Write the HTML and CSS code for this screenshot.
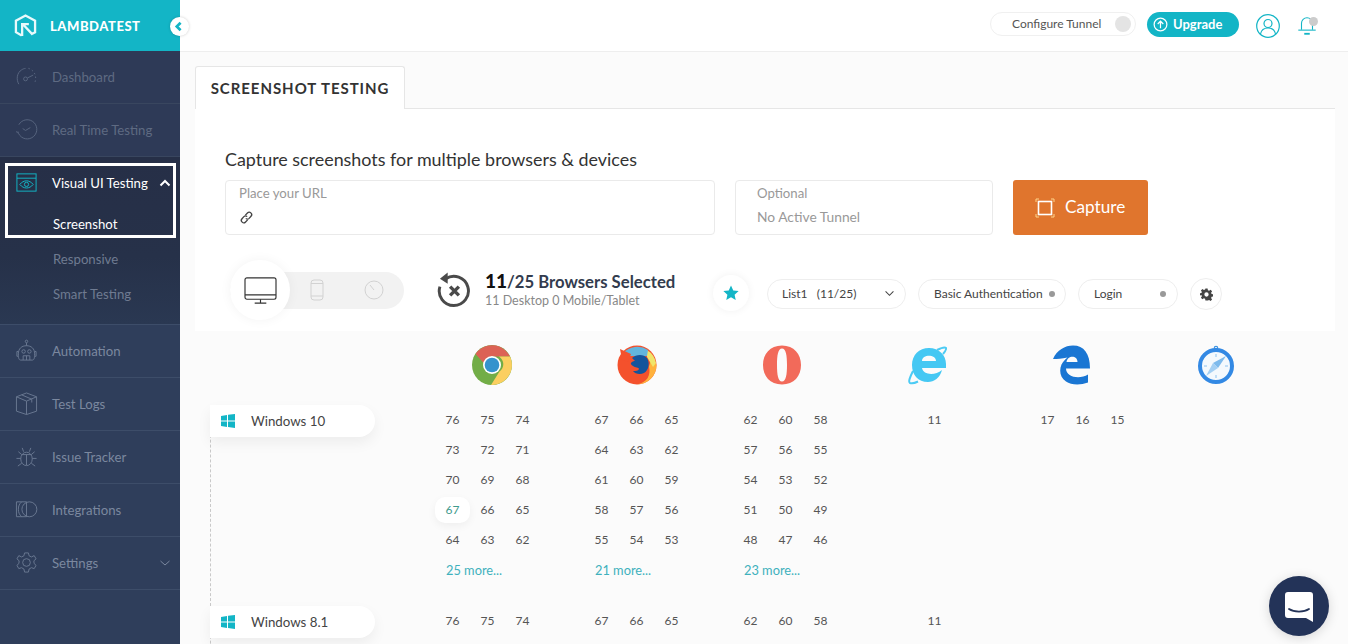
FILE: index.html
```html
<!DOCTYPE html>
<html lang="en">
<head>
  <meta charset="UTF-8" />
  <meta name="viewport" content="width=device-width, initial-scale=1.0"/>
  <title>Screenshot Testing - LambdaTest</title>
  <link rel="stylesheet" href="styles.css">
</head>
<body>
  <div class="app">
    <!-- Sidebar -->
    <aside class="sidebar">
      <div class="logo">
        <svg class="logo-mark" viewBox="0 0 24 24"><path d="M8 22.500 2 19V7l10-5.500L22 7v12l-3 1.700"/><path d="M8.500 23V10.500h7M10 11.500l9.500 10"/></svg>
        <span class="logo-text">LAMBDATEST</span>
      </div>

      <a class="nav-item nav-item--dim">
        <svg class="nav-icon" viewBox="0 0 24 24"><path d="M4 20C1 15 2 8 7 5c1.500-1 3-1.400 4-1.400"/><path stroke-dasharray="1.500 2.500" d="M14 3.500c5 1.500 8 6 7.500 11.500l-1 5"/><circle cx="11" cy="14.500" r="2"/><path d="m13 13.500 6-3"/></svg>
        Dashboard
      </a>
      <a class="nav-item nav-item--dim">
        <svg class="nav-icon" viewBox="0 0 24 24"><path d="M4 7a10 10 0 1 1-1 7"/><path d="M1 14c1 1 1.500 1 2.500 2M8 11l3 2 5-3"/></svg>
        Real Time Testing
      </a>

      <div class="nav-group">
        <div class="nav-group-head">
          <svg class="nav-icon nav-icon--teal" viewBox="0 0 24 24"><rect x="2" y="3" width="20" height="18"/><path d="M2 7.500h20"/><path d="M5 14c4-5 10-5 14 0-4 5-10 5-14 0z"/><circle cx="12" cy="14" r="2.200"/></svg>
          Visual UI Testing
          <svg class="caret" viewBox="0 0 12 8"><path d="M1.500 6.500 6 2l4.500 4.500"/></svg>
        </div>
        <a class="sub-item sub-item--active">Screenshot</a>
        <a class="sub-item">Responsive</a>
        <a class="sub-item">Smart Testing</a>
        <div class="nav-focus"></div>
      </div>

      <a class="nav-item">
        <svg class="nav-icon" viewBox="0 0 24 24"><circle cx="12" cy="2.500" r="1.300"/><path d="M12 4v3M6 22c-2 0-2.500-2-2.500-6.500C3.500 10 7 7 12 7s8.500 3 8.500 8.500C20.500 20 20 22 18 22z"/><path d="M3.500 13H2v5h1.500M20.500 13H22v5h-1.500"/><circle cx="9" cy="13" r="1.800"/><circle cx="15" cy="13" r="1.800"/><path d="M8.500 22v-4.500h7V22M12 17.500V22"/></svg>
        Automation
      </a>
      <a class="nav-item">
        <svg class="nav-icon" viewBox="0 0 24 24"><path d="m12 1 10.500 4v15L12 23.500 1.500 20V5z"/><path d="m1.500 5 10.500 4.500L22.500 5M12 9.500v14M7 3l10.500 4.500V11"/></svg>
        Test Logs
      </a>
      <a class="nav-item">
        <svg class="nav-icon" viewBox="0 0 24 24"><ellipse cx="12" cy="14.500" rx="6" ry="7"/><path d="M7 10h10M12 10v11M9 7 7.500 3M15 7l1.500-4M6 14H1.500M18 14h4.500M7 19l-4 3M17 19l4 3M7 10 3.500 7M17 10l3.500-3"/></svg>
        Issue Tracker
      </a>
      <a class="nav-item">
        <svg class="nav-icon" viewBox="0 0 24 24"><path d="M12 4H1.500v15.500H12M7 4c-2.500 2-3.500 4.500-3.500 7.700S4.500 17.500 7 19.500"/><circle cx="15" cy="11.800" r="7.800"/><path d="M12 4v15.500"/></svg>
        Integrations
      </a>
      <a class="nav-item">
        <svg class="nav-icon" viewBox="0 0 24 24"><path d="M10 2h4l.7 3 2.500 1.200 2.800-1.400 2 3.400-2.300 2 .2 2.800 2.100 2-2 3.400-2.800-1-2.500 1.400L14 22h-4l-.7-3.200-2.500-1.400-2.800 1-2-3.400 2.100-2 .2-2.800L2 8.200l2-3.400 2.800 1.400L9.300 5z"/><circle cx="12" cy="12" r="4"/></svg>
        Settings
        <svg class="caret caret--dim" viewBox="0 0 12 8"><path d="M1.500 2 6 6l4.500-4"/></svg>
      </a>

      <button class="collapse-btn">
        <svg viewBox="0 0 12 12"><path d="M7 2.500 3.500 6 7 9.500"/></svg>
      </button>
    </aside>

    <main class="main">
      <!-- Top bar -->
      <header class="topbar">
        <div class="tunnel-pill">
          <span>Configure Tunnel</span>
          <i class="tunnel-dot"></i>
        </div>
        <a class="upgrade-btn">
          <svg viewBox="0 0 16 16"><circle cx="8" cy="8" r="6.800"/><path d="M8 12V4.800M5 7.500l3-3 3 3"/></svg>
          Upgrade
        </a>
        <svg class="user-icon" viewBox="0 0 24 24"><circle cx="12" cy="12" r="11.300"/><circle cx="12" cy="9.500" r="4"/><path d="M4.500 20c.8-4 3.500-6 7.500-6s6.700 2 7.500 6"/></svg>
        <div class="bell">
          <svg viewBox="0 0 24 24"><path d="M6 16V9a6 6 0 0 1 12 0v7"/><path d="M2.500 16.500h19"/><path d="M9 20.500h6" stroke-width="2"/></svg>
          <i class="bell-dot"></i>
        </div>
      </header>

      <div class="content">
        <div class="tabs">
          <div class="tab">SCREENSHOT TESTING</div>
        </div>

        <section class="card">
          <h2>Capture screenshots for multiple browsers &amp; devices</h2>
          <div class="capture-row">
            <div class="field field--url">
              <label>Place your URL</label>
              <svg class="link-icon" viewBox="0 0 16 16"><path d="M6.800 5.500 9 3.200a2.500 2.500 0 0 1 3.800 3.500l-2 2.200a2.500 2.500 0 0 1-3.500 0"/><path d="M9.200 10.500 7 12.800a2.500 2.500 0 0 1-3.800-3.500l2-2.200a2.500 2.500 0 0 1 3.500 0"/></svg>
            </div>
            <div class="field field--tunnel">
              <label>Optional</label>
              <span>No Active Tunnel</span>
            </div>
            <button class="capture-btn">
              <svg viewBox="0 0 20 20"><rect x="3.500" y="3.500" width="13" height="13"/><path class="corner" d="M1 4V1h3M16 1h3v3M19 16v3h-3M4 19H1v-3"/></svg>
              Capture
            </button>
          </div>

          <div class="options-row">
            <div class="device-toggle">
              <div class="device-active">
                <svg viewBox="0 0 34 32"><rect x="1" y="3" width="32" height="22" rx="2"/><path d="M1 20.500h32M17 25v4M11 29h12"/></svg>
              </div>
              <svg class="device-icon" viewBox="0 0 16 24"><rect x="2" y="2" width="12" height="20" rx="3"/><path d="M2 5.500h12M2 18h12"/></svg>
              <svg class="device-icon device-icon--timer" viewBox="0 0 24 24"><circle cx="12" cy="12" r="9"/><path d="m12 12-4-5"/></svg>
            </div>

            <div class="selected">
              <svg class="reset-icon" viewBox="0 0 36 38"><path d="M9 7.500a15 15 0 1 1-6 8" fill="none" stroke-width="3"/><path class="fill" d="M11 1 3 7.500l8 5z"/><path d="m13.500 15.500 9 9M22.500 15.500l-9 9" fill="none" stroke-width="3.500"/></svg>
              <div>
                <div class="selected-title"><b>11</b>/25 Browsers Selected</div>
                <div class="selected-sub">11 Desktop 0 Mobile/Tablet</div>
              </div>
            </div>

            <div class="star-btn">
              <svg viewBox="0 0 24 24"><path d="m12 2 3 6.600 7.200.8-5.400 4.800 1.500 7.100L12 17.700l-6.300 3.600 1.500-7.100L1.800 9.400 9 8.600z"/></svg>
            </div>
            <div class="pill pill--list">
              <span>List1 &nbsp; (11/25)</span>
              <svg class="pill-caret" viewBox="0 0 12 8"><path d="M1.500 1.500 6 6l4.500-4.500"/></svg>
            </div>
            <div class="pill pill--auth"><span>Basic Authentication</span><i></i></div>
            <div class="pill pill--login"><span>Login</span><i></i></div>
            <div class="gear-btn">
              <svg viewBox="0 0 24 24"><path fill-rule="evenodd" d="M10 1h4l.6 3.200 2.200.9 2.700-1.800 2.800 2.800-1.800 2.700.9 2.200 3.200.6v4l-3.200.6-.9 2.200 1.800 2.700-2.800 2.800-2.700-1.800-2.200.9L14 23h-4l-.6-3.200-2.200-.9-2.700 1.800-2.800-2.800 1.800-2.700-.9-2.200L-.6 14v-4l3.200-.6.9-2.200-1.800-2.700 2.800-2.800 2.700 1.800 2.200-.9zM12 8a4 4 0 1 0 0 8 4 4 0 0 0 0-8z"/></svg>
            </div>
          </div>
        </section>

        <!-- Browser icons -->
        <div class="browser-icons">
          <svg viewBox="0 0 40 40">
            <circle cx="20" cy="20" r="20" fill="#72ad47"/>
            <path fill="#dc6255" d="M3.500 9A20 20 0 0 1 38 11.500H20a8.500 8.500 0 0 0-8.300 6.500z"/>
            <path fill="#fbcf60" d="M38 11.500A20 20 0 0 1 19 40l8.500-13.500A9 9 0 0 0 27 11.500z"/>
            <circle cx="20" cy="20" r="9" fill="#fff"/>
            <circle cx="20" cy="20" r="7.300" fill="#3593cd"/>
          </svg>
          <svg viewBox="0 0 40 40">
            <circle cx="20" cy="20" r="19.500" fill="#f4512c"/>
            <path fill="#ffb23c" d="M39.500 20A19.500 19.500 0 0 1 20 39.500c10-2 14-9 12-18l3-10a19 19 0 0 1 4.500 8.500z"/>
            <path fill="#f0e56a" d="M30 5a19.500 19.500 0 0 1 9 13l-3 4-6-10z"/>
            <path fill="#62b5dd" d="M6 8a19.500 19.500 0 0 1 25-3l-1 6H12z"/>
            <path fill="#f4512c" d="M3 4 5 15l6 2 3-8z"/>
            <path fill="#14549b" d="M15 13c4-4 12-4 15 0 3 5 2 12-3 15-4 2-9 1-11-2 3 0 5 0 6-2 0-2-4-1-6-3-2-1-3-3-1-4 1-1 2-1 3-1-1-1-2-2-3-3z"/>
          </svg>
          <svg viewBox="0 0 40 40">
            <path fill="#f26a5a" fill-rule="evenodd" d="M20 .5C8 .5 1 9 1 20s7 19.500 19 19.500S39 31 39 20 32 .5 20 .5zm0 3c4 0 5 7 5 16.500s-1 16.500-5 16.500-5-7-5-16.500S16 3.500 20 3.500z"/>
          </svg>
          <svg viewBox="0 0 40 40">
            <path fill="#45c8f3" fill-rule="evenodd" d="M22 3c10 0 17 7 17 16v4H15c1 7 13 8 20 2-2 8-8 12-14 12C11 37 5 30 5 20S12 3 22 3zm-7 13h14c0-7-14-7-14 0z"/>
            <path fill="none" stroke="#4ccbf4" stroke-width="2" d="M30 5c4-2 8-3 9-2 .5 1-.5 3-3 6M6 26C3 32 1 37 3 38c2 .7 5 0 8-1.500"/>
          </svg>
          <svg viewBox="0 0 40 40">
            <path fill="#1a76d3" fill-rule="evenodd" d="M1 14C5 5 13 .5 21 .5c11 0 17 8 17 23H14c0 9 14 11 22 6v8c-8 3-17 2.500-22-1-6-4-7-11-4.500-17 1.500-3 3.500-5 6-7-6 1-10 1.500-14.500 1.500zm13.500 3h11c0-7-10-7-11 0z"/>
          </svg>
          <svg viewBox="0 0 40 40">
            <circle cx="19" cy="3" r="1.700" fill="none" stroke="#3d94e2" stroke-width="1.200"/>
            <circle cx="19" cy="21" r="16" fill="#f4f9fd" stroke="#3389e4" stroke-width="4"/>
            <path fill="#7dbaec" d="m29 11-8 12-5-5z"/>
            <path fill="#a3cff3" d="m9 31 7-13 5 5z"/>
            <path stroke="#8cc2f0" d="M19 9v3M19 30v3M7 21h3M28 21h3"/>
          </svg>
        </div>

        <!-- Windows 10 -->
        <div class="os-row">
          <div class="os-label">
            <svg class="win-icon" viewBox="0 0 14 14"><path d="M0 2 6 1v5.500H0zM7 .8 14 0v6.500H7zM0 7.500h6V13l-6-1zM7 7.500h7V14l-7-1z"/></svg>
            Windows 10
          </div>
          <div class="versions">
            <div class="vgroup">
              <span>76</span><span>75</span><span>74</span>
              <span>73</span><span>72</span><span>71</span>
              <span>70</span><span>69</span><span>68</span>
              <span class="is-selected">67</span><span>66</span><span>65</span>
              <span>64</span><span>63</span><span>62</span>
              <a class="more">25 more...</a>
            </div>
            <div class="vgroup">
              <span>67</span><span>66</span><span>65</span>
              <span>64</span><span>63</span><span>62</span>
              <span>61</span><span>60</span><span>59</span>
              <span>58</span><span>57</span><span>56</span>
              <span>55</span><span>54</span><span>53</span>
              <a class="more">21 more...</a>
            </div>
            <div class="vgroup">
              <span>62</span><span>60</span><span>58</span>
              <span>57</span><span>56</span><span>55</span>
              <span>54</span><span>53</span><span>52</span>
              <span>51</span><span>50</span><span>49</span>
              <span>48</span><span>47</span><span>46</span>
              <a class="more">23 more...</a>
            </div>
            <div class="vgroup"><span class="only">11</span></div>
            <div class="vgroup vgroup--edge"><span>17</span><span>16</span><span>15</span></div>
          </div>
        </div>

        <!-- Windows 8.1 -->
        <div class="os-row">
          <div class="os-label">
            <svg class="win-icon" viewBox="0 0 14 14"><path d="M0 2 6 1v5.500H0zM7 .8 14 0v6.500H7zM0 7.500h6V13l-6-1zM7 7.500h7V14l-7-1z"/></svg>
            Windows 8.1
          </div>
          <div class="versions">
            <div class="vgroup"><span>76</span><span>75</span><span>74</span></div>
            <div class="vgroup"><span>67</span><span>66</span><span>65</span></div>
            <div class="vgroup"><span>62</span><span>60</span><span>58</span></div>
            <div class="vgroup"><span class="only">11</span></div>
          </div>
        </div>
      </div>

      <!-- Chat launcher -->
      <div class="chat-btn">
        <svg viewBox="0 0 28 30"><path fill="#fff" d="M3 0h22a3 3 0 0 1 3 3v27l-7-4H3a3 3 0 0 1-3-3V3a3 3 0 0 1 3-3z"/><path fill="none" stroke="#233358" stroke-width="1.800" stroke-linecap="round" d="M4 17c5 3.500 15 3.500 20 0"/></svg>
      </div>
    </main>
  </div>
</body>
</html>
```

FILE: styles.css
```css
/* Global resets */
* {
  box-sizing: border-box;
  margin: 0;
  padding: 0;
}
body {
  font-family: Lato, 'Open Sans', sans-serif;
  background: #fbfbfb;
  color: #444;
  overflow: hidden;
}
svg {
  display: block;
}
.app {
  display: flex;
  height: 100vh;
  overflow: hidden;
}

/* Sidebar */
.sidebar {
  position: relative;
  z-index: 2;
  flex: 0 0 180px;
  background: #2f3e5b;
  font-size: 13.2px;
}
.logo {
  display: flex;
  align-items: center;
  height: 51px;
  padding-left: 14px;
  background: #13b5c6;
}
.logo-mark {
  width: 23px;
  height: 23px;
  fill: none;
  stroke: #e8f9fb;
  stroke-width: 2.4;
}
.logo-text {
  margin-left: 13px;
  color: #fff;
  font-size: 13px;
  font-weight: 900;
  letter-spacing: 0.55px;
}
.nav-item {
  display: flex;
  align-items: center;
  height: 53px;
  padding: 0 0 1px 15px;
  color: #7b889f;
  border-bottom: 1px solid #3d4d69;
}
.nav-item--dim {
  color: #5e6a82;
  background: #2e3a57;
  border-bottom-color: #39465f;
}
.nav-icon {
  flex: 0 0 23px;
  height: 23px;
  margin-right: 14px;
  fill: none;
  stroke: #6a7891;
  stroke-width: 1;
}
.nav-item--dim .nav-icon {
  stroke: #586580;
}
.nav-icon--teal {
  stroke: #13b5c6;
}
.nav-group {
  position: relative;
  height: 168px;
  padding-top: 2px;
  background: linear-gradient(#262f47, #263149 60%, #2a3852);
  border-bottom: 1px solid #3d4d69;
}
.nav-group-head {
  display: flex;
  align-items: center;
  height: 48px;
  padding: 0 0 1px 15px;
  color: #fff;
}
.caret {
  width: 12px;
  height: 8px;
  margin-left: auto;
  margin-right: 9px;
  fill: none;
  stroke: #fff;
  stroke-width: 2;
}
.caret--dim {
  stroke: #7b889f;
  stroke-width: 1;
  margin-right: 9px;
}
.sub-item {
  display: block;
  height: 35px;
  padding-left: 53px;
  line-height: 35px;
  font-size: 13.2px;
  color: #6f7b91;
}
.sub-item--active {
  color: #fff;
}
.nav-focus {
  position: absolute;
  top: 6px;
  left: 5px;
  width: 171px;
  height: 75px;
  border: 3px solid #fff;
}
.collapse-btn {
  position: absolute;
  top: 17px;
  left: 170px;
  width: 19px;
  height: 19px;
  border: none;
  border-radius: 50%;
  background: #fff;
  box-shadow: 0 0 3px rgba(0,0,0,0.2);
}
.collapse-btn svg {
  width: 13px;
  height: 13px;
  margin: auto;
  fill: none;
  stroke: #13b5c6;
  stroke-width: 2.5;
}

/* Main area */
.main {
  position: relative;
  flex: 1;
  min-width: 0;
}
.topbar {
  display: flex;
  align-items: center;
  justify-content: flex-end;
  height: 52px;
  padding-right: 30px;
  background: #fff;
  border-bottom: 1px solid #eee;
}
.tunnel-pill {
  display: flex;
  align-items: center;
  justify-content: space-between;
  width: 146px;
  height: 24px;
  margin-top: -3px;
  padding: 0 4px 1px 21px;
  border: 1px solid #f0f0f0;
  border-radius: 12px;
  font-size: 12px;
  color: #555;
}
.tunnel-dot {
  width: 16px;
  height: 16px;
  border-radius: 50%;
  background: #e4e4e4;
}
.upgrade-btn {
  display: flex;
  align-items: center;
  width: 92px;
  height: 25px;
  margin: -3px 0 0 11px;
  padding-left: 6px;
  border-radius: 13px;
  background: #13b5c6;
  color: #fff;
  font-size: 13px;
  font-weight: 700;
}
.upgrade-btn svg {
  width: 15px;
  height: 15px;
  margin-right: 5px;
  fill: none;
  stroke: #fff;
  stroke-width: 1.3;
}
.user-icon {
  width: 24px;
  height: 24px;
  margin-left: 17px;
  fill: none;
  stroke: #13b5c6;
  stroke-width: 1.2;
}
.bell {
  position: relative;
  width: 22px;
  height: 22px;
  margin-left: 16px;
}
.bell svg {
  width: 22px;
  height: 22px;
  fill: none;
  stroke: #13b5c6;
  stroke-width: 1.2;
}
.bell-dot {
  position: absolute;
  top: 2px;
  right: 0;
  width: 9px;
  height: 9px;
  border-radius: 50%;
  background: #ccc;
}

/* Content */
.content {
  padding: 14px 13px 0 15px;
}
.tabs {
  display: flex;
  height: 43px;
  border-bottom: 1px solid #e6e6e6;
}
.tab {
  width: 210px;
  height: 43px;
  border: 1px solid #e6e6e6;
  border-bottom: none;
  border-radius: 3px 3px 0 0;
  background: #fff;
  text-align: center;
  line-height: 42px;
  font-size: 15px;
  font-weight: 700;
  letter-spacing: 0.95px;
  color: #333;
}
.card {
  height: 222px;
  padding: 40px 0 0 30px;
  background: #fff;
}
.card h2 {
  height: 20px;
  margin-bottom: 11px;
  font-size: 17.9px;
  font-weight: 400;
  line-height: 20px;
  color: #333;
}
.capture-row {
  display: flex;
}
.field {
  height: 55px;
  border: 1px solid #eaeaea;
  border-radius: 4px;
  font-size: 13.2px;
  color: #999;
}
.field label {
  display: block;
  margin-top: 4px;
  height: 16px;
  line-height: 16px;
}
.field--url {
  width: 490px;
  padding-left: 13px;
}
.link-icon {
  width: 15px;
  height: 15px;
  margin-top: 9px;
  fill: none;
  stroke: #444;
  stroke-width: 1.4;
}
.field--tunnel {
  width: 258px;
  margin-left: 20px;
  padding-left: 21px;
}
.field--tunnel span {
  display: block;
  margin-top: 7px;
  font-size: 13.8px;
  line-height: 17px;
}
.capture-btn {
  display: flex;
  align-items: center;
  width: 135px;
  height: 55px;
  margin-left: 20px;
  padding: 0 0 3px 22px;
  border: none;
  border-radius: 3px;
  background: #e0752d;
  color: #fff;
  font-family: inherit;
  font-size: 17.2px;
}
.capture-btn svg {
  width: 20px;
  height: 20px;
  margin: 4px 10px 0 0;
  fill: none;
  stroke: #fff;
  stroke-width: 1.6;
}
.capture-btn .corner {
  stroke: #ffd58a;
  stroke-width: 1;
}

/* Options row */
.options-row {
  display: flex;
  align-items: center;
  height: 60px;
  margin-top: 25px;
}
.device-toggle {
  display: flex;
  align-items: center;
  width: 174px;
  height: 37px;
  margin-left: 5px;
  border-radius: 19px;
  background: #f2f2f2;
}
.device-active {
  display: flex;
  align-items: center;
  justify-content: center;
  flex: 0 0 60px;
  height: 60px;
  border-radius: 50%;
  background: #fff;
  box-shadow: 0 0 12px rgba(0,0,0,0.05);
}
.device-active svg {
  width: 33px;
  height: 31px;
  fill: none;
  stroke: #333;
  stroke-width: 1.2;
}
.device-icon {
  width: 16px;
  height: 24px;
  margin-left: 19px;
  fill: none;
  stroke: #d2d2d2;
  stroke-width: 1;
}
.device-icon--timer {
  width: 24px;
  margin-left: 37px;
}
.selected {
  display: flex;
  align-items: center;
  width: 277px;
  margin-left: 33px;
}
.reset-icon {
  width: 35px;
  height: 38px;
  margin-right: 13px;
  stroke: #4a4a4a;
}
.reset-icon .fill {
  fill: #4a4a4a;
  stroke: none;
}
.selected-title {
  margin-top: -2px;
  font-size: 16.7px;
  font-weight: 700;
  line-height: 20px;
  color: #333c4e;
}
.selected-title b {
  font-size: 19px;
  color: #111;
}
.selected-sub {
  margin-top: 2px;
  font-size: 12.5px;
  line-height: 14px;
  color: #888;
}
.star-btn {
  display: flex;
  align-items: center;
  justify-content: center;
  flex: 0 0 36px;
  height: 36px;
  margin: 6px 0 0 -1px;
  border-radius: 50%;
  background: #fff;
  box-shadow: 0 0 8px rgba(0,0,0,0.06);
}
.star-btn svg {
  width: 18px;
  height: 18px;
  fill: #13b5c6;
}
.pill {
  display: flex;
  align-items: center;
  justify-content: space-between;
  height: 30px;
  margin: 8px 0 0 12px;
  padding: 0 10px 1px 15px;
  border: 1px solid #eee;
  border-radius: 15px;
  background: #fff;
  font-size: 12px;
  color: #444;
}
.pill i {
  width: 6px;
  height: 6px;
  border-radius: 50%;
  background: #999;
}
.pill--list {
  width: 139px;
  margin-left: 18px;
  padding-left: 14px;
}
.pill--auth {
  width: 148px;
}
.pill--login {
  width: 100px;
  padding-right: 11px;
}
.pill-caret {
  width: 11px;
  height: 7px;
  fill: none;
  stroke: #444;
  stroke-width: 1.2;
}
.gear-btn {
  display: flex;
  align-items: center;
  justify-content: center;
  flex: 0 0 32px;
  height: 32px;
  margin: 8px 0 0 12px;
  border: 1px solid #eee;
  border-radius: 50%;
}
.gear-btn svg {
  width: 13px;
  height: 13px;
  fill: #444;
}

/* Browser matrix */
.browser-icons {
  display: flex;
  gap: 105px;
  height: 74px;
  padding: 14px 0 0 277px;
}
.browser-icons svg {
  flex: 0 0 40px;
  height: 40px;
}
.os-row {
  display: flex;
  margin-left: 15px;
  height: 201px;
  border-left: 1px dashed #c9c9c9;
}
.os-label {
  display: flex;
  align-items: center;
  flex: 0 0 165px;
  height: 32px;
  margin-left: -1px;
  padding: 0 0 1px 11px;
  border-radius: 0 16px 16px 0;
  background: #fff;
  box-shadow: 0 6px 14px rgba(0,0,0,0.06);
  font-size: 13.3px;
  color: #444;
}
.win-icon {
  width: 14px;
  height: 14px;
  margin: 1px 16px 0 0;
  fill: #13b5c6;
}
.versions {
  display: grid;
  grid-template-columns: repeat(5, 105px);
  column-gap: 44px;
  align-content: start;
  margin-left: 60px;
}
.vgroup {
  display: grid;
  grid-template-columns: repeat(3, 35px);
  grid-auto-rows: 30px;
  text-align: center;
  font-size: 12px;
  line-height: 30px;
  color: #555;
}
.vgroup--edge {
  margin-left: -1px;
}
.only {
  grid-column: 2;
}
.is-selected {
  height: 26px;
  margin-top: 2px;
  line-height: 26px;
  border-radius: 10px;
  background: #fff;
  box-shadow: 0 3px 8px rgba(0,0,0,0.05);
  color: #3f9b8d;
}
.more {
  grid-column: 1 / span 3;
  padding-left: 11px;
  text-align: left;
  font-size: 12.8px;
  color: #3fb1bd;
}

/* Chat launcher */
.chat-btn {
  position: absolute;
  top: 576px;
  left: 1089px;
  display: flex;
  align-items: center;
  justify-content: center;
  width: 60px;
  height: 60px;
  border-radius: 50%;
  background: #233358;
  box-shadow: 0 2px 12px rgba(0,0,0,0.15);
}
.chat-btn svg {
  width: 28px;
  height: 30px;
  margin-top: 2px;
}
```
